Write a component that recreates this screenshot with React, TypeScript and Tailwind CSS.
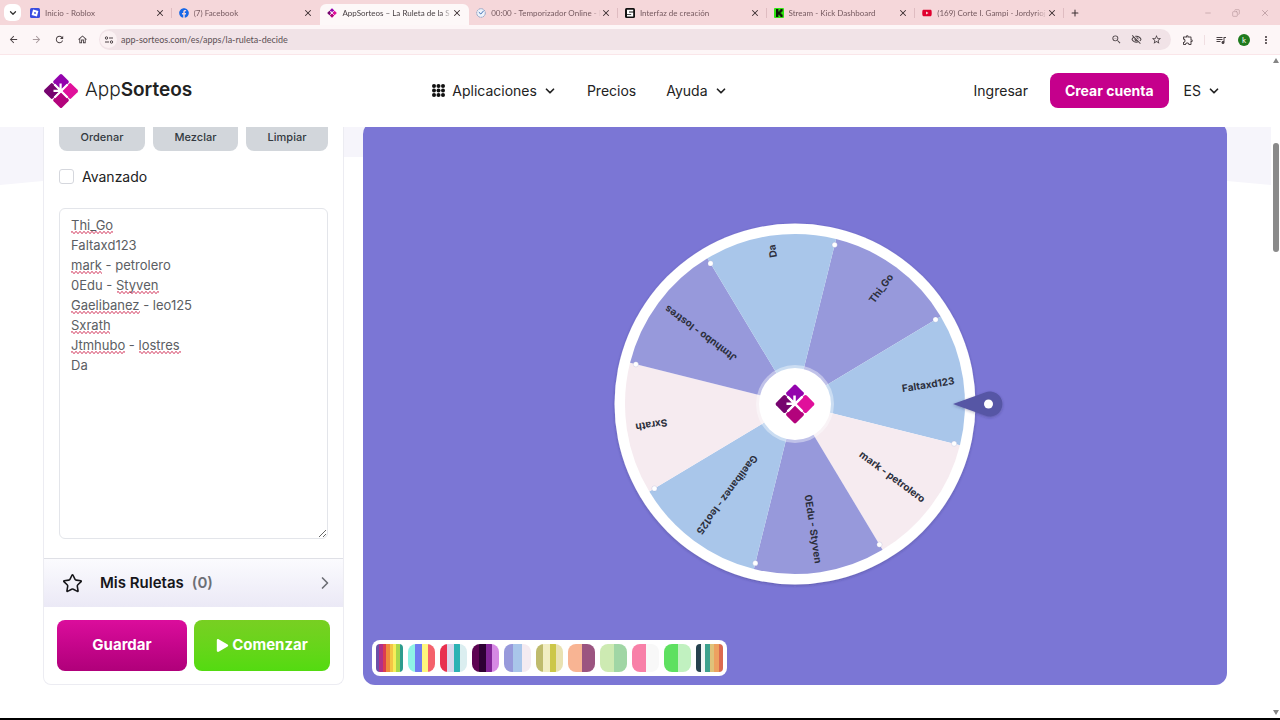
import { useState } from "react";
import type { ReactNode } from "react";
import {
  MdArrowBack,
  MdArrowForward,
  MdMoreVert,
  MdOutlineExtension,
  MdOutlineHome,
  MdOutlineVisibilityOff,
  MdQueueMusic,
  MdRefresh,
  MdStarBorder,
  MdZoomOut,
} from "react-icons/md";
import { FaFacebook, FaPlay, FaYoutube } from "react-icons/fa";
import { ChevronDown, ChevronRight, Copy, Minus, Plus, Star, X } from "lucide-react";

function Logo({ className }: { className?: string }) {
  return (
    <svg viewBox="0 0 36 36" className={className} aria-hidden="true">
      <rect x="-6" y="-6" width="12" height="12" rx="1.6" fill="#9303ad" transform="translate(18 8.8) rotate(45)" />
      <rect x="-6" y="-6" width="12" height="12" rx="1.6" fill="#76046f" transform="translate(8.8 18) rotate(45)" />
      <rect x="-6" y="-6" width="12" height="12" rx="1.6" fill="#e0109b" transform="translate(27.2 18) rotate(45)" />
      <rect x="-6" y="-6" width="12" height="12" rx="1.6" fill="#b3037c" transform="translate(18 27.2) rotate(45)" />
      <path d="M17.6 19V10.500M19 17.800H10.500M11.500 11.500l13 13M24.500 11.500l-13 13" stroke="#fff" strokeWidth="2.2" />
    </svg>
  );
}

function RobloxIcon() {
  return (
    <svg viewBox="0 0 10 10" className="size-2.5 shrink-0">
      <rect width="10" height="10" rx="1.5" fill="#3a4de0" />
      <path d="M3.1 1.6l5.3 1.5-1.5 5.3-5.3-1.5z" fill="#fff" />
      <path d="M4.4 4l1.6.4-.4 1.6L4 5.6z" fill="#3a4de0" />
    </svg>
  );
}

function TimerIcon() {
  return (
    <svg viewBox="0 0 10 10" className="size-2.5 shrink-0" fill="none">
      <circle cx="5" cy="5" r="4.3" fill="#eef3fb" stroke="#7e98bd" strokeWidth=".8" strokeDasharray="2 .5" />
      <path d="M2.8 4.2L4.8 6l3-3.4" stroke="#3f6fb5" strokeWidth="1" />
    </svg>
  );
}

function StudioIcon() {
  return (
    <svg viewBox="0 0 10 10" className="size-2.5 shrink-0">
      <rect width="10" height="10" rx="1.5" fill="#111" />
      <path d="M2 1.800h6.200v1.600H4v1h4.200v4H2V6.800h4.200v-.9H2z" fill="#fff" />
    </svg>
  );
}

function KickIcon() {
  return (
    <svg viewBox="0 0 10 10" className="size-2.5 shrink-0">
      <rect width="10" height="10" rx="1" fill="#31e512" />
      <path d="M2 1h2.4v2.4h1V2.3h1V1H8.6v2.6h-1v1h-1v1h1v1h1V9H6.4V7.8h-1V6.7h-1V9H2z" fill="#0c1a08" />
    </svg>
  );
}

const TABS: { title: string; icon: ReactNode; active?: boolean }[] = [
  { title: "Inicio - Roblox", icon: <RobloxIcon /> },
  { title: "(7) Facebook", icon: <FaFacebook className="size-2.5 shrink-0 text-[#1768e8]" /> },
  { title: "AppSorteos – La Ruleta de la S", icon: <Logo className="size-2.5 shrink-0" />, active: true },
  { title: "00:00 - Temporizador Online - P", icon: <TimerIcon /> },
  { title: "Interfaz de creación", icon: <StudioIcon /> },
  { title: "Stream - Kick Dashboard", icon: <KickIcon /> },
  { title: "(169) Corte I. Gampi - Jordyrioj", icon: <FaYoutube className="size-2.5 shrink-0 text-[#e0002e]" /> },
];

function BrowserBar() {
  return (
    <div className="font-[Lato,'Noto_Sans',sans-serif]">
      <div className="flex h-[25px] items-stretch bg-[#f5d7da] pl-1">
        <button aria-label="Buscar pestañas" className="mt-1 flex size-[17px] items-center justify-center rounded-md bg-white">
          <ChevronDown className="size-2.5 text-[#333]" strokeWidth={3} />
        </button>
        <div className="ml-0.5 flex flex-1">
          {TABS.map((tab, i) => (
            <div
              key={tab.title}
              className={`flex min-w-0 flex-1 items-center pr-[7px] pl-[7px] ${
                tab.active ? "mt-1 rounded-t-md bg-[#fdf8f8] pb-1" : "relative"
              }`}
            >
              {tab.icon}
              <span
                className={`ml-[5px] min-w-0 flex-1 mask-r-from-90% text-[8px] whitespace-nowrap ${
                  tab.active ? "text-[#453d40]" : "text-[#75595f]"
                }`}
              >
                {tab.title}
              </span>
              <button aria-label={`Cerrar ${tab.title}`} className="shrink-0">
                <X className="size-2.5 text-[#3d3033]" strokeWidth={2.5} />
              </button>
              {!tab.active && i !== 1 && <span className="absolute right-0 h-2.5 w-px bg-[#dfbcc1]" />}
            </div>
          ))}
        </div>
        <div className="flex w-[216px] items-center justify-between pr-[10px] pl-[6px] text-[#b99a9f]">
          <button aria-label="Nueva pestaña">
            <Plus className="size-2.5 text-[#3d3033]" strokeWidth={2.5} />
          </button>
          <div className="flex gap-5">
            <button aria-label="Minimizar"><Minus className="size-2" /></button>
            <button aria-label="Restaurar"><Copy className="size-2 -scale-x-100" /></button>
            <button aria-label="Cerrar ventana"><X className="size-2.5" /></button>
          </div>
        </div>
      </div>
      <div className="flex h-[30px] items-center border-b border-[#fae6e9] bg-[#fdf6f7] px-2 text-[#4a4144]">
        <div className="flex gap-3">
          <button aria-label="Atrás"><MdArrowBack className="size-[11px]" /></button>
          <button aria-label="Adelante"><MdArrowForward className="size-[11px] text-[#a89a9d]" /></button>
          <button aria-label="Recargar"><MdRefresh className="size-[11px]" /></button>
          <button aria-label="Inicio"><MdOutlineHome className="size-[11px]" /></button>
        </div>
        <div className="ml-[11px] flex h-[21px] flex-1 items-center rounded-full bg-[#f1e3e7] pr-[9px] pl-px">
          <span className="flex size-[17px] items-center justify-center rounded-full bg-[#fbf1f3]">
            <svg viewBox="0 0 10 10" className="size-2.5" fill="none" stroke="#4a4144" strokeWidth="1">
              <circle cx="2.5" cy="3" r="1.2" />
              <path d="M5 3h4M1 7h4" />
              <circle cx="7.5" cy="7" r="1.2" />
            </svg>
          </span>
          <input
            aria-label="Dirección"
            defaultValue="app-sorteos.com/es/apps/la-ruleta-decide"
            className="ml-1 min-w-0 flex-1 bg-transparent text-[9px] text-[#5c5054] outline-none"
          />
          <div className="flex gap-[9px]">
            <button aria-label="Zoom"><MdZoomOut className="size-[11px]" /></button>
            <button aria-label="Rastreo"><MdOutlineVisibilityOff className="size-[11px]" /></button>
            <button aria-label="Favorito"><MdStarBorder className="size-[11px]" /></button>
          </div>
        </div>
        <button aria-label="Extensiones" className="ml-[11px]"><MdOutlineExtension className="size-3" /></button>
        <span className="mx-[10px] h-2.5 w-px bg-[#f0dfe2]" />
        <button aria-label="Cola multimedia"><MdQueueMusic className="size-3" /></button>
        <button className="ml-[11px] size-3 rounded-full bg-[#1f7a1d] text-[8px] leading-3 text-white">k</button>
        <button aria-label="Menú" className="ml-[10px]"><MdMoreVert className="size-3" /></button>
      </div>
    </div>
  );
}

function SiteHeader() {
  return (
    <header className="relative z-10 flex h-[72px] items-center justify-between bg-white pr-[50px] pb-px pl-[43px] text-[14px] text-[#222]">
      <a href="#inicio" className="flex items-center gap-1.5 text-[19px] text-[#222]">
        <Logo className="size-9" />
        <span>
          <span className="font-light">App</span>
          <span className="font-semibold">Sorteos</span>
        </span>
      </a>
      <nav className="mr-1.5 flex items-center gap-[30px]">
        <button className="flex items-center">
          <svg viewBox="0 0 13 13" className="mr-[7px] size-[13px]" fill="#111">
            {[2, 6.5, 11].map((y) => [2, 6.5, 11].map((x) => <circle key={`${x}-${y}`} cx={x} cy={y} r="2" />))}
          </svg>
          Aplicaciones
          <ChevronDown className="ml-1.5 size-3.5" strokeWidth={3} />
        </button>
        <a href="#precios">Precios</a>
        <button className="flex items-center">
          Ayuda
          <ChevronDown className="ml-1.5 size-3.5" strokeWidth={3} />
        </button>
      </nav>
      <div className="flex items-center">
        <a href="#ingresar">Ingresar</a>
        <button className="ml-[22px] h-[35px] rounded-lg bg-[#c5008c] px-[15px] font-bold text-white">Crear cuenta</button>
        <button className="ml-[15px] flex items-center">
          ES
          <ChevronDown className="ml-1.5 size-3.5" strokeWidth={3} />
        </button>
      </div>
    </header>
  );
}

const NAMES = [
  "Thi_Go",
  "Faltaxd123",
  "mark - petrolero",
  "0Edu - Styven",
  "Gaelibanez - leo125",
  "Sxrath",
  "Jtmhubo - lostres",
  "Da",
];

// Spelling marks under the entries: line, left and width in px
const MARKS = [
  { line: 0, x: 0, w: 42 },
  { line: 2, x: 0, w: 31 },
  { line: 3, x: 46, w: 42 },
  { line: 4, x: 0, w: 69 },
  { line: 5, x: 0, w: 39 },
  { line: 6, x: 0, w: 54 },
  { line: 6, x: 68, w: 42 },
];

function Sidebar() {
  const [entries, setEntries] = useState(NAMES.join("\n"));
  const [advanced, setAdvanced] = useState(false);
  const initial = entries === NAMES.join("\n");

  return (
    <aside className="w-[301px] shrink-0 rounded-b-lg border border-t-0 border-[#ececf2] bg-white">
      <div className="px-[15px]">
        <div className="flex gap-2 text-[11px] font-medium text-[#333940]">
          <button className="h-6 grow rounded-b-lg bg-[#d2d6db] px-5 pb-1">Ordenar</button>
          <button className="h-6 grow rounded-b-lg bg-[#d2d6db] px-5 pb-1">Mezclar</button>
          <button className="h-6 grow rounded-b-lg bg-[#d2d6db] px-5 pb-1">Limpiar</button>
        </div>
        <label className="mt-[15px] flex h-5 items-center gap-2 text-[14px] text-[#222]">
          <input
            type="checkbox"
            checked={advanced}
            onChange={(e) => setAdvanced(e.target.checked)}
            className="size-[15px] appearance-none rounded-[3px] border border-[#d5d7dd] bg-white checked:bg-[#c5008c]"
          />
          Avanzado
        </label>
        <div className="relative mt-[22px]">
          <textarea
            aria-label="Participantes"
            spellCheck={false}
            value={entries}
            onChange={(e) => setEntries(e.target.value)}
            className="block h-[331px] w-full resize-y rounded-md border border-[#e3e5ea] bg-white px-[11px] py-1.5 text-[13px] leading-5 text-[#5b5e63] outline-none"
          />
          {initial && (
            <svg className="pointer-events-none absolute top-[7px] left-3 h-40 w-60" fill="none" aria-hidden="true">
              <defs>
                <pattern id="wave" width="4" height="3" patternUnits="userSpaceOnUse">
                  <path d="M-1 3.2L1 .8l2 2.4L5 .8" transform="translate(0 -.5)" stroke="#cf2850" strokeWidth=".9" />
                </pattern>
              </defs>
              {MARKS.map((m) => (
                <g key={`${m.line}-${m.x}`} transform={`translate(${m.x} ${m.line * 20 + 16})`}>
                  <rect width={m.w} height="3" fill="url(#wave)" />
                </g>
              ))}
            </svg>
          )}
        </div>
      </div>
      <button className="mt-[19px] flex h-[49px] w-full items-center border-t border-[#dfe0e6] bg-linear-to-b from-[#fbfbfe] to-[#ebe9f6] pr-2 pl-[18px] text-[15px] font-semibold text-[#16161a]">
        <Star className="size-[21px]" strokeWidth={1.8} />
        <span className="ml-[17px]">Mis Ruletas</span>
        <span className="ml-2 text-[#6d6f75]">(0)</span>
        <ChevronRight className="ml-auto size-5 text-[#6d6f75]" />
      </button>
      <div className="flex gap-[7px] px-[13px] pt-[13px] pb-[13px] text-[15px] font-bold text-white">
        <button className="h-[51px] flex-[130] rounded-lg bg-linear-to-b from-[#db0d9c] to-[#b0007a]">Guardar</button>
        <button className="flex h-[51px] flex-[136] items-center justify-center gap-[3px] rounded-lg bg-linear-to-b from-[#78cf22] to-[#53db10]">
          <FaPlay className="size-[13px]" />
          Comenzar
        </button>
      </div>
    </aside>
  );
}

const SLICE = 45;
const START = -76;
const SLICE_COLORS = ["#9799db", "#a9c6ea", "#f6ebf0"];

function point(radius: number, deg: number) {
  const rad = (deg * Math.PI) / 180;
  return [radius * Math.cos(rad), radius * Math.sin(rad)];
}

function Wheel() {
  return (
    <svg viewBox="-210 -190 420 380" className="h-[380px] w-[420px]" role="img" aria-label="Ruleta">
      <defs>
        <filter id="shadow" x="-20%" y="-20%" width="140%" height="140%">
          <feDropShadow dx="0" dy="1" stdDeviation="1.5" floodColor="#2a2560" floodOpacity=".35" />
        </filter>
      </defs>
      <circle r="180.5" fill="#fff" filter="url(#shadow)" />
      {NAMES.map((name, i) => {
        const a = START + i * SLICE;
        const [x1, y1] = point(170, a);
        const [x2, y2] = point(170, a + SLICE);
        return (
          <g key={name}>
            <path d={`M0 0L${x1} ${y1}A170 170 0 0 1 ${x2} ${y2}Z`} fill={SLICE_COLORS[i % 3]} />
            <text
              x="161"
              y="4"
              textAnchor="end"
              transform={`rotate(${a + SLICE / 2})`}
              className="fill-[#2c2f3c] text-[10px] font-bold"
            >
              {name}
            </text>
          </g>
        );
      })}
      {NAMES.map((name, i) => {
        const [cx, cy] = point(164, START + i * SLICE);
        return <circle key={name} cx={cx} cy={cy} r="2.6" fill="#fff" stroke="#8a8ac0" strokeOpacity=".35" strokeWidth=".6" />;
      })}
      <circle r="39" fill="#fff" fillOpacity=".4" />
      <circle r="36" fill="#fff" />
      <g transform="translate(-20.5 -20.5)">
        <svg width="41" height="41">
          <Logo />
        </svg>
      </g>
      <g filter="url(#shadow)">
        <path d="M158 0L190 -11.500A12.500 12.500 0 1 1 190 11.500Z" fill="#5756a5" />
        <circle cx="193.500" r="4.500" fill="#fff" />
      </g>
    </svg>
  );
}

const PALETTES = [
  ["bg-[#6a50a8]", "bg-[#b0308a]", "bg-[#dd3c50]", "bg-[#ee8a3c]", "bg-[#f4c445]", "bg-[#f6ee5a]", "bg-[#a6d84c]", "bg-[#2c9c8e]"],
  ["bg-[#8ff3e6]", "bg-[#6f7cf0]", "bg-[#fdf67c]", "bg-[#f4626c]"],
  ["bg-[#e8304f]", "bg-[#dad8ec]", "bg-[#2cb2b4]", "bg-[#dbeef0]"],
  ["bg-[#5c0452]", "bg-[#2e0034]", "bg-[#84269a]", "bg-[#d68ae4]"],
  ["bg-[#9799db]", "bg-[#a9c6ea]", "bg-[#f4ebf1]"],
  ["bg-[#bfbb6c]", "bg-[#f1edc2]", "bg-[#ccc748]", "bg-[#e9e2b2]"],
  ["bg-[#f8b493]", "bg-[#9b5480]"],
  ["bg-[#cdeab2]", "bg-[#a0d6a5]"],
  ["bg-[#f880a8]", "bg-[#f8f8f8]"],
  ["bg-[#5ee060]", "bg-[#c1f1c0]"],
  ["bg-[#26424e]", "bg-[#f2f6f5]", "bg-[#3da28d]", "bg-[#dfc27a]", "bg-[#eda160]", "bg-[#dc6a50]"],
];

function WheelPanel() {
  return (
    <section className="relative -mt-[5px] flex flex-1 items-center justify-center rounded-xl bg-[#7b76d5]">
      <Wheel />
      <div className="absolute bottom-[9px] left-[9px] flex gap-[5px] rounded-lg bg-white p-1">
        {PALETTES.map((stripes, i) => (
          <button
            key={i}
            aria-label={`Paleta ${i + 1}`}
            className={`flex h-7 w-[27px] overflow-hidden ${stripes.length > 4 ? "rounded-sm" : "rounded-lg"}`}
          >
            {stripes.map((color) => (
              <span key={color} className={`h-full flex-1 ${color}`} />
            ))}
          </button>
        ))}
      </div>
    </section>
  );
}

export default function App() {
  return (
    <div className="flex min-h-screen flex-col border-b-2 border-black bg-white font-[Inter,sans-serif]">
      <BrowserBar />
      <div className="flex flex-1">
        <div className="flex min-w-0 flex-1 flex-col">
          <SiteHeader />
          <main className="relative flex flex-1 flex-col overflow-hidden">
            {/* Pale backdrop behind the cards */}
            <svg viewBox="0 0 1271 58" preserveAspectRatio="none" className="absolute top-0 left-0 h-[58px] w-full" aria-hidden="true">
              <path d="M0 58L43 54L343 30H363L1227 54L1271 58V0H0Z" fill="#f6f5fb" />
            </svg>
            <div className="relative flex gap-[19px] pr-11 pl-[43px]">
              <Sidebar />
              <WheelPanel />
            </div>
          </main>
        </div>
        <div className="flex w-[9px] flex-col items-center bg-white py-[3px]" aria-hidden="true">
          <span className="border-x-[3px] border-b-[5px] border-x-transparent border-b-[#858585]" />
          <span className="mt-20 h-[109px] w-1.5 rounded-full bg-[#8a8a8a]" />
          <span className="mt-auto border-x-[3px] border-t-[5px] border-x-transparent border-t-[#858585]" />
        </div>
      </div>
    </div>
  );
}
